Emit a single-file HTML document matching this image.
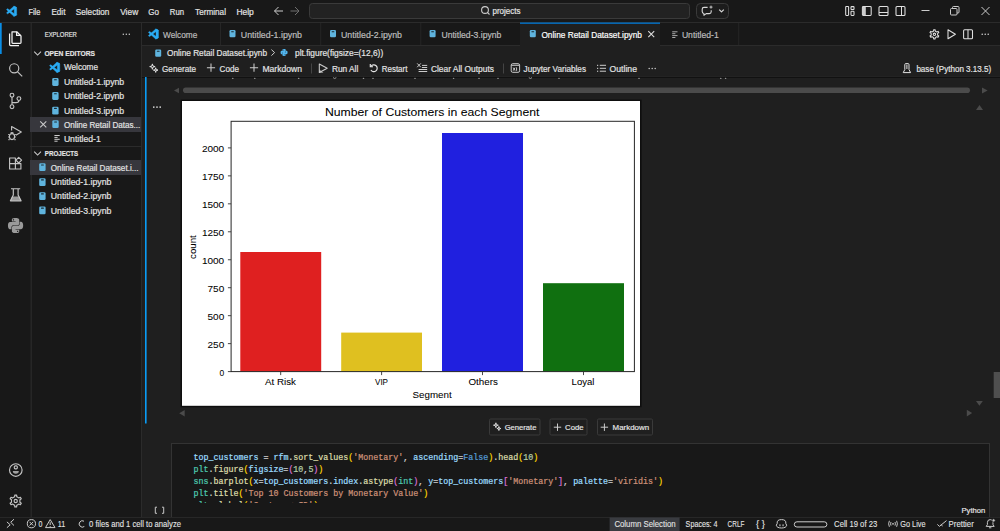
<!DOCTYPE html><html><head><meta charset="utf-8"><style>html,body{margin:0;padding:0;background:#181818;overflow:hidden;width:1000px;height:531px}svg{display:block;font-family:"Liberation Sans",sans-serif}</style></head><body>
<svg width="1000" height="531" viewBox="0 0 1000 531">
<rect x="0" y="0" width="1000" height="531" fill="#181818" />
<rect x="142" y="46" width="858" height="471" fill="#1f1f1f" />
<rect x="0" y="22" width="1000" height="1" fill="#2b2b2b" />
<rect x="30.5" y="23" width="1.5" height="494" fill="#262626" />
<rect x="141" y="23" width="1" height="494" fill="#2b2b2b" />
<rect x="142" y="45" width="858" height="1" fill="#2b2b2b" />
<rect x="0" y="517" width="1000" height="1" fill="#2b2b2b" />
<g transform="translate(6.6,6.2) scale(0.10099999999999999)" fill="#2aabf3" stroke="#2aabf3" stroke-width="3.47" stroke-linejoin="round"><path d="M96.46 10.8L75.86.87C73.48-.28 70.63.2 68.76 2.07L1.33 63.55c-1.81 1.65-1.81 4.51.01 6.16l5.51 5.01c1.49 1.350 3.72 1.45 5.32.24l81.23-61.63c2.73-2.07 6.65-.12 6.65 3.3v-.24c0-2.41-1.38-4.6-3.55-5.64z"/><path d="M96.46 89.2l-20.6 9.93c-2.38 1.15-5.23.66-7.1-1.21L1.33 36.45c-1.810-1.65-1.81-4.51.01-6.16l5.51-5.01c1.49-1.35 3.72-1.45 5.32-.24l81.23 61.63c2.73 2.07 6.65.12 6.65-3.3v.24c0 2.41-1.38 4.6-3.55 5.64z"/><path d="M75.86 99.13c-2.38 1.15-5.23.66-7.1-1.21 2.31 2.31 6.26.67 6.26-2.59V4.67c0-3.26-3.95-4.9-6.26-2.59 1.87-1.87 4.72-2.36 7.1-1.21l20.6 9.92c2.16 1.04 3.54 3.23 3.54 5.630v67.17c0 2.4-1.38 4.59-3.54 5.63z"/></g>
<text x="28.4" y="15" font-size="8.4" fill="#e4e4e4" stroke="#e4e4e4" stroke-width="0.18" textLength="12" lengthAdjust="spacingAndGlyphs" >File</text>
<text x="51.4" y="15" font-size="8.4" fill="#e4e4e4" stroke="#e4e4e4" stroke-width="0.18" textLength="14" lengthAdjust="spacingAndGlyphs" >Edit</text>
<text x="75.8" y="15" font-size="8.4" fill="#e4e4e4" stroke="#e4e4e4" stroke-width="0.18" textLength="33.6" lengthAdjust="spacingAndGlyphs" >Selection</text>
<text x="120.2" y="15" font-size="8.4" fill="#e4e4e4" stroke="#e4e4e4" stroke-width="0.18" textLength="18" lengthAdjust="spacingAndGlyphs" >View</text>
<text x="148.3" y="15" font-size="8.4" fill="#e4e4e4" stroke="#e4e4e4" stroke-width="0.18" textLength="10.7" lengthAdjust="spacingAndGlyphs" >Go</text>
<text x="169.8" y="15" font-size="8.4" fill="#e4e4e4" stroke="#e4e4e4" stroke-width="0.18" textLength="14.2" lengthAdjust="spacingAndGlyphs" >Run</text>
<text x="195.1" y="15" font-size="8.4" fill="#e4e4e4" stroke="#e4e4e4" stroke-width="0.18" textLength="30.9" lengthAdjust="spacingAndGlyphs" >Terminal</text>
<text x="236.4" y="15" font-size="8.4" fill="#e4e4e4" stroke="#e4e4e4" stroke-width="0.18" textLength="17.4" lengthAdjust="spacingAndGlyphs" >Help</text>
<g stroke="#cccccc" stroke-width="1" fill="none"><path d="M274.5 11H283M278.5 7L274.5 11L278.5 15"/></g>
<g stroke="#6e6e6e" stroke-width="1" fill="none"><path d="M290.5 11H299M295 7L299 11L295 15"/></g>
<rect x="309.5" y="3.5" width="380" height="15" rx="3" fill="#222222" stroke="#3a3a3a"/>
<g stroke="#cccccc" stroke-width="1.1" fill="none"><circle cx="485" cy="10" r="3.4"/><path d="M487.4 12.4L489.5 14.5"/></g>
<text x="492.5" y="14" font-size="8.4" fill="#e4e4e4" stroke="#e4e4e4" stroke-width="0.18" textLength="28" lengthAdjust="spacingAndGlyphs" >projects</text>
<rect x="696.5" y="3.5" width="32" height="15" rx="4" fill="#1c1c1c" stroke="#3a3a3a"/>
<g stroke="#d8d8d8" stroke-width="1.1" fill="none" stroke-linejoin="round"><path d="M707.6 7.4H704Q702.2 7.4 702.2 9.2V11.6Q702.2 13.3 703.9 13.5V15.3L706.2 13.6H709.3Q711.2 13.6 711.2 11.7V10.2"/><path d="M711 5.6V8.6M709.5 7.1H712.5" stroke-width="0.9"/><path d="M719.2 9.6L721.5 11.9L723.8 9.6" stroke-width="1.2"/></g>
<g stroke="#e0e0e0" stroke-width="1.05" fill="none"><rect x="845.7" y="6.5" width="2.9" height="8.9" rx="0.6"/><rect x="851" y="6.6" width="3" height="2.9" rx="0.6"/><rect x="851" y="11.3" width="3" height="4.1" rx="0.6"/><rect x="862.4" y="6.5" width="8.8" height="8.9" rx="0.9"/><rect x="862.6" y="6.8" width="3.2" height="8.4" fill="#cccccc" stroke="none"/><rect x="879" y="6.5" width="9" height="9" rx="1"/><path d="M879 12.5H888"/><rect x="896" y="6.5" width="9" height="9" rx="1"/><path d="M901.5 6.5V15.5"/></g>
<g stroke="#cccccc" stroke-width="1" fill="none"><path d="M921.5 10.5H929.5"/><rect x="950.5" y="8.5" width="6.5" height="6.5" rx="1"/><path d="M952.5 8.5V7.5Q952.5 6.5 953.5 6.5H958Q959 6.5 959 7.5V12Q959 13 958 13H957"/><path d="M981.5 7L989.5 15M989.5 7L981.5 15"/></g>
<rect x="0" y="23" width="1.7" height="31" fill="#0a8ee6" />
<g stroke="#f2f2f2" stroke-width="1.25" fill="none" stroke-linejoin="round"><path d="M12 31.8H16.8L21 36V42.6Q21 43.4 20.2 43.4H12.8Q12 43.4 12 42.6Z"/><path d="M16.6 31.8V35.4H21"/><path d="M9.6 33.6V44.6Q9.6 45.6 10.6 45.6H19"/></g>
<g stroke="#c4c4c4" stroke-width="1.15" fill="none"><circle cx="14.2" cy="68.3" r="4.6"/><path d="M17.6 71.8L22.2 76.4"/></g>
<g stroke="#c4c4c4" stroke-width="1.15" fill="none"><circle cx="12" cy="95.2" r="1.9"/><circle cx="12" cy="106.7" r="1.9"/><circle cx="18.9" cy="98.6" r="1.9"/><path d="M12 97.1V104.8M18.9 100.5Q18.9 102.6 16 102.6H12"/></g>
<g stroke="#c4c4c4" stroke-width="1.15" fill="none" stroke-linejoin="round"><path d="M11.6 130.6V126.5L21.3 132L15.8 135.3"/><ellipse cx="12" cy="136.6" rx="2.6" ry="3"/><path d="M8.2 134.5H9.4M8.2 137H9.4M8.4 139.6H9.6M14.6 134.5H15.8M14.6 137H15.8M14.4 139.6H15.6M10.6 133.2Q12 131.8 13.4 133.2"/></g>
<g stroke="#c4c4c4" stroke-width="1.15" fill="none" stroke-linejoin="round"><path d="M9.6 158V169H20.9V163.6H15.4V158Z"/><path d="M9.6 163.6H15.4V169"/><path d="M18.7 157.4L21.6 160.2L18.7 163L15.9 160.2Z"/></g>
<g stroke="#c4c4c4" stroke-width="1.15" fill="none" stroke-linejoin="round"><path d="M11 188.7H20.2M13.3 188.7V195L10.4 200.8H21.1L18.1 195V188.7"/></g>
<path d="M12 196.5H19.4L21 200.8H10.4Z" fill="#c4c4c4" opacity="0.75"/>
<g transform="translate(8,218) scale(0.63)" fill="#9a9a9a"><path d="M14.25.18l.9.2.73.26.59.3.45.32.34.34.25.34.16.33.1.3.04.26.02.2-.01.13V8.5l-.05.63-.13.55-.21.46-.26.38-.3.31-.33.25-.35.19-.35.14-.33.1-.3.07-.26.04-.21.02H8.77l-.69.05-.59.14-.5.22-.41.27-.33.32-.27.35-.2.36-.15.37-.1.35-.07.32-.04.27-.02.21v3.06H3.17l-.21-.03-.28-.07-.32-.12-.35-.18-.36-.26-.36-.36-.35-.46-.32-.59-.28-.73-.21-.88-.14-1.050-.05-1.23.06-1.22.16-1.04.24-.87.32-.71.36-.57.4-.44.42-.33.42-.24.4-.16.36-.1.32-.05.24-.01h.16l.06.01h8.16v-.83H6.18l-.01-2.75-.02-.37.05-.34.11-.31.17-.28.25-.26.31-.23.38-.2.44-.18.51-.15.58-.12.64-.1.71-.06.77-.04.84-.02 1.27.05zm-6.3 1.98l-.23.33-.08.41.08.41.23.34.33.22.41.09.41-.09.33-.22.23-.34.08-.41-.08-.41-.23-.33-.33-.22-.41-.09-.41.09zm13.09 3.95l.28.06.32.12.35.18.36.27.36.35.35.47.32.59.28.73.21.88.14 1.04.05 1.23-.06 1.23-.16 1.04-.24.86-.32.71-.36.57-.4.45-.42.33-.42.24-.4.16-.36.09-.32.05-.24.02-.16-.01h-8.22v.82h5.84l.01 2.76.02.36-.05.34-.11.31-.17.29-.25.25-.31.24-.38.2-.44.17-.51.15-.58.13-.64.09-.71.07-.77.04-.84.01-1.27-.04-1.07-.14-.9-.2-.73-.25-.59-.3-.45-.33-.34-.34-.25-.34-.16-.33-.1-.3-.04-.25-.02-.2.01-.13v-5.34l.05-.64.13-.54.21-.46.26-.38.3-.32.33-.24.35-.2.35-.14.33-.1.3-.06.26-.04.21-.02.13-.01h5.84l.69-.05.59-.14.5-.21.41-.28.33-.32.27-.35.2-.36.15-.36.1-.35.07-.32.04-.28.02-.21V6.07h2.09l.14.01zm-6.47 14.25l-.23.33-.08.41.08.41.23.33.33.23.41.08.41-.08.33-.23.23-.33.08-.41-.08-.41-.23-.33-.33-.23-.41-.08-.41.08z"/></g>
<g stroke="#c4c4c4" stroke-width="1.15" fill="none"><circle cx="15.8" cy="470" r="6.3"/><rect x="14.3" y="465.8" width="3" height="3" rx="1"/></g>
<path d="M12.8 471H18.8Q18.8 473.8 15.8 473.8Q12.8 473.8 12.8 471Z" fill="#c4c4c4" opacity="0.8"/>
<g stroke="#c4c4c4" stroke-width="1.15" fill="none" stroke-linejoin="round"><path d="M14.65 496.73L14.78 495.07L16.62 495.07L16.75 496.73L17.80 497.36L18.87 497.95L20.37 497.24L21.29 498.83L19.93 499.78L19.90 501.00L19.93 502.22L21.29 503.17L20.37 504.76L18.87 504.05L17.80 504.64L16.75 505.27L16.62 506.93L14.78 506.93L14.65 505.27L13.60 504.64L12.53 504.05L11.03 504.76L10.11 503.17L11.47 502.22L11.50 501.00L11.47 499.78L10.11 498.83L11.03 497.24L12.53 497.95L13.60 497.36Z"/><circle cx="15.7" cy="501" r="1.6"/></g>
<text x="44.7" y="36.9" font-size="7.4" fill="#e4e4e4" stroke="#e4e4e4" stroke-width="0.18" textLength="32.2" lengthAdjust="spacingAndGlyphs" >EXPLORER</text>
<circle cx="123.3" cy="34.2" r="0.75" fill="#cccccc"/>
<circle cx="126.3" cy="34.2" r="0.75" fill="#cccccc"/>
<circle cx="129.3" cy="34.2" r="0.75" fill="#cccccc"/>
<path d="M34.2 51.6L37.6 55.0L41.0 51.6" stroke="#cccccc" stroke-width="1.05" fill="none"/>
<text x="44.4" y="55.9" font-size="7.6" fill="#e4e4e4" stroke="#e4e4e4" stroke-width="0.18" textLength="50.6" lengthAdjust="spacingAndGlyphs" font-weight="bold" >OPEN EDITORS</text>
<g transform="translate(49.6,62.3) scale(0.102)" fill="#2aabf3" stroke="#2aabf3" stroke-width="3.43" stroke-linejoin="round"><path d="M96.46 10.8L75.86.87C73.48-.28 70.63.2 68.76 2.07L1.33 63.55c-1.81 1.65-1.81 4.51.01 6.16l5.51 5.01c1.49 1.350 3.72 1.45 5.32.24l81.23-61.63c2.73-2.07 6.65-.12 6.65 3.3v-.24c0-2.41-1.38-4.6-3.55-5.64z"/><path d="M96.46 89.2l-20.6 9.93c-2.38 1.15-5.23.66-7.1-1.21L1.33 36.45c-1.810-1.65-1.81-4.51.01-6.16l5.51-5.01c1.49-1.35 3.72-1.45 5.32-.24l81.23 61.63c2.73 2.07 6.65.12 6.65-3.3v.24c0 2.41-1.38 4.6-3.55 5.64z"/><path d="M75.86 99.13c-2.38 1.15-5.23.66-7.1-1.21 2.31 2.31 6.26.67 6.26-2.59V4.67c0-3.26-3.95-4.9-6.26-2.59 1.87-1.87 4.72-2.36 7.1-1.21l20.6 9.92c2.16 1.04 3.54 3.23 3.54 5.630v67.17c0 2.4-1.38 4.59-3.54 5.63z"/></g>
<text x="63.9" y="70.3" font-size="8.4" fill="#e4e4e4" stroke="#e4e4e4" stroke-width="0.18" textLength="34.1" lengthAdjust="spacingAndGlyphs" >Welcome</text>
<rect x="52.2" y="78.1" width="6.4" height="7.8" rx="1.3" fill="#5fb4de"/>
<rect x="54.0" y="79.19999999999999" width="2.9" height="1.1" rx="0.5" fill="#1a2a33"/>
<text x="63.9" y="85.1" font-size="8.4" fill="#e4e4e4" stroke="#e4e4e4" stroke-width="0.18" textLength="60.3" lengthAdjust="spacingAndGlyphs" >Untitled-1.ipynb</text>
<rect x="52.2" y="92.1" width="6.4" height="7.8" rx="1.3" fill="#5fb4de"/>
<rect x="54.0" y="93.19999999999999" width="2.9" height="1.1" rx="0.5" fill="#1a2a33"/>
<text x="63.9" y="99.1" font-size="8.4" fill="#e4e4e4" stroke="#e4e4e4" stroke-width="0.18" textLength="60.3" lengthAdjust="spacingAndGlyphs" >Untitled-2.ipynb</text>
<rect x="52.2" y="106.7" width="6.4" height="7.8" rx="1.3" fill="#5fb4de"/>
<rect x="54.0" y="107.8" width="2.9" height="1.1" rx="0.5" fill="#1a2a33"/>
<text x="63.9" y="113.7" font-size="8.4" fill="#e4e4e4" stroke="#e4e4e4" stroke-width="0.18" textLength="60.3" lengthAdjust="spacingAndGlyphs" >Untitled-3.ipynb</text>
<rect x="30" y="117" width="111" height="15" fill="#37373d" />
<path d="M40.2 121.3L46.3 127.4M46.3 121.3L40.2 127.4" stroke="#cccccc" stroke-width="1.05"/>
<rect x="52.3" y="120.3" width="6.4" height="7.8" rx="1.3" fill="#5fb4de"/>
<rect x="54.099999999999994" y="121.39999999999999" width="2.9" height="1.1" rx="0.5" fill="#1a2a33"/>
<text x="63.9" y="128" font-size="8.4" fill="#e4e4e4" stroke="#e4e4e4" stroke-width="0.18" textLength="76.4" lengthAdjust="spacingAndGlyphs" >Online Retail Datas...</text>
<rect x="54.4" y="135.0" width="5.3" height="1" fill="#cccccc"/>
<rect x="54.4" y="136.9" width="3.2" height="1" fill="#cccccc"/>
<rect x="54.4" y="138.8" width="5.3" height="1" fill="#cccccc"/>
<rect x="54.4" y="140.7" width="3.2" height="1" fill="#cccccc"/>
<text x="63.9" y="141.6" font-size="8.4" fill="#e4e4e4" stroke="#e4e4e4" stroke-width="0.18" textLength="36.9" lengthAdjust="spacingAndGlyphs" >Untitled-1</text>
<rect x="30" y="146" width="111" height="1" fill="#2b2b2b" />
<path d="M34.2 151.6L37.6 155.0L41.0 151.6" stroke="#cccccc" stroke-width="1.05" fill="none"/>
<text x="44.8" y="155.8" font-size="7.6" fill="#e4e4e4" stroke="#e4e4e4" stroke-width="0.18" textLength="33.4" lengthAdjust="spacingAndGlyphs" font-weight="bold" >PROJECTS</text>
<rect x="30" y="160" width="111" height="15" fill="#37373d" />
<rect x="39.2" y="163.3" width="6.4" height="7.8" rx="1.3" fill="#5fb4de"/>
<rect x="41.0" y="164.4" width="2.9" height="1.1" rx="0.5" fill="#1a2a33"/>
<text x="50.8" y="170.9" font-size="8.4" fill="#e4e4e4" stroke="#e4e4e4" stroke-width="0.18" textLength="87.7" lengthAdjust="spacingAndGlyphs" >Online Retail Dataset.i...</text>
<rect x="39.2" y="178.2" width="6.4" height="7.8" rx="1.3" fill="#5fb4de"/>
<rect x="41.0" y="179.29999999999998" width="2.9" height="1.1" rx="0.5" fill="#1a2a33"/>
<text x="50.8" y="185.2" font-size="8.4" fill="#e4e4e4" stroke="#e4e4e4" stroke-width="0.18" textLength="60.6" lengthAdjust="spacingAndGlyphs" >Untitled-1.ipynb</text>
<rect x="39.2" y="192.2" width="6.4" height="7.8" rx="1.3" fill="#5fb4de"/>
<rect x="41.0" y="193.29999999999998" width="2.9" height="1.1" rx="0.5" fill="#1a2a33"/>
<text x="50.8" y="199.2" font-size="8.4" fill="#e4e4e4" stroke="#e4e4e4" stroke-width="0.18" textLength="60.6" lengthAdjust="spacingAndGlyphs" >Untitled-2.ipynb</text>
<rect x="39.2" y="206.5" width="6.4" height="7.8" rx="1.3" fill="#5fb4de"/>
<rect x="41.0" y="207.6" width="2.9" height="1.1" rx="0.5" fill="#1a2a33"/>
<text x="50.8" y="213.5" font-size="8.4" fill="#e4e4e4" stroke="#e4e4e4" stroke-width="0.18" textLength="60.6" lengthAdjust="spacingAndGlyphs" >Untitled-3.ipynb</text>
<rect x="220" y="23" width="1" height="22" fill="#262626" />
<rect x="320.2" y="23" width="1" height="22" fill="#262626" />
<rect x="420.3" y="23" width="1" height="22" fill="#262626" />
<rect x="738.2" y="23" width="1" height="22" fill="#262626" />
<rect x="520" y="23" width="140" height="23" fill="#1f1f1f" />
<rect x="520" y="22.5" width="140" height="1.3" fill="#0078d4" />
<g transform="translate(148.5,29) scale(0.1)" fill="#2aabf3" stroke="#2aabf3" stroke-width="3.50" stroke-linejoin="round"><path d="M96.46 10.8L75.86.87C73.48-.28 70.63.2 68.76 2.07L1.33 63.55c-1.81 1.65-1.81 4.51.01 6.16l5.51 5.01c1.49 1.350 3.72 1.45 5.32.24l81.23-61.63c2.73-2.07 6.65-.12 6.65 3.3v-.24c0-2.41-1.38-4.6-3.55-5.64z"/><path d="M96.46 89.2l-20.6 9.93c-2.38 1.15-5.23.66-7.1-1.21L1.33 36.45c-1.810-1.65-1.81-4.51.01-6.16l5.51-5.01c1.49-1.35 3.72-1.45 5.32-.24l81.23 61.63c2.73 2.07 6.65.12 6.65-3.3v.24c0 2.41-1.38 4.6-3.55 5.64z"/><path d="M75.86 99.13c-2.38 1.15-5.23.66-7.1-1.21 2.31 2.31 6.26.67 6.26-2.59V4.67c0-3.26-3.95-4.9-6.26-2.59 1.87-1.87 4.72-2.36 7.1-1.21l20.6 9.92c2.16 1.04 3.54 3.23 3.54 5.630v67.17c0 2.4-1.38 4.59-3.54 5.63z"/></g>
<text x="163" y="37.5" font-size="8.4" fill="#bdbdbd" stroke="#bdbdbd" stroke-width="0.18" textLength="34.4" lengthAdjust="spacingAndGlyphs" >Welcome</text>
<rect x="229.5" y="30" width="6" height="7.2" rx="1.2" fill="#5fb4de"/>
<rect x="231.1" y="31.2" width="2.8" height="1" rx="0.5" fill="#1a2a33"/>
<text x="240.8" y="37.5" font-size="8.4" fill="#bdbdbd" stroke="#bdbdbd" stroke-width="0.18" textLength="61.2" lengthAdjust="spacingAndGlyphs" >Untitled-1.ipynb</text>
<rect x="330" y="30" width="6" height="7.2" rx="1.2" fill="#5fb4de"/>
<rect x="331.6" y="31.2" width="2.8" height="1" rx="0.5" fill="#1a2a33"/>
<text x="341" y="37.5" font-size="8.4" fill="#bdbdbd" stroke="#bdbdbd" stroke-width="0.18" textLength="61" lengthAdjust="spacingAndGlyphs" >Untitled-2.ipynb</text>
<rect x="429.6" y="30" width="6" height="7.2" rx="1.2" fill="#5fb4de"/>
<rect x="431.20000000000005" y="31.2" width="2.8" height="1" rx="0.5" fill="#1a2a33"/>
<text x="441.4" y="37.5" font-size="8.4" fill="#bdbdbd" stroke="#bdbdbd" stroke-width="0.18" textLength="60" lengthAdjust="spacingAndGlyphs" >Untitled-3.ipynb</text>
<rect x="529.8" y="30" width="6" height="7.2" rx="1.2" fill="#5fb4de"/>
<rect x="531.4" y="31.2" width="2.8" height="1" rx="0.5" fill="#1a2a33"/>
<text x="541.4" y="37.5" font-size="8.4" fill="#ffffff" stroke="#ffffff" stroke-width="0.18" textLength="100.5" lengthAdjust="spacingAndGlyphs" >Online Retail Dataset.ipynb</text>
<path d="M648.3 31.2L654.2 37.1M654.2 31.2L648.3 37.1" stroke="#dddddd" stroke-width="1.1"/>
<rect x="672.2" y="31.3" width="5.3" height="1" fill="#a8a8a8"/>
<rect x="672.2" y="33.2" width="3.2" height="1" fill="#a8a8a8"/>
<rect x="672.2" y="35.1" width="5.3" height="1" fill="#a8a8a8"/>
<rect x="672.2" y="37.0" width="3.2" height="1" fill="#a8a8a8"/>
<text x="681.9" y="37.5" font-size="8.4" fill="#bdbdbd" stroke="#bdbdbd" stroke-width="0.18" textLength="36.8" lengthAdjust="spacingAndGlyphs" >Untitled-1</text>
<g stroke="#e0e0e0" stroke-width="1.05" fill="none" stroke-linejoin="round"><path d="M933.59 31.00L933.68 29.66L935.12 29.66L935.21 31.00L936.00 31.53L936.85 31.94L938.06 31.35L938.78 32.60L937.67 33.35L937.60 34.30L937.67 35.25L938.78 36.00L938.06 37.25L936.85 36.66L936.00 37.07L935.21 37.60L935.12 38.94L933.68 38.94L933.59 37.60L932.80 37.07L931.95 36.66L930.74 37.25L930.02 36.00L931.13 35.25L931.20 34.30L931.13 33.35L930.02 32.60L930.74 31.35L931.95 31.94L932.80 31.53Z"/><circle cx="934.4" cy="34.3" r="1.2"/><path d="M948 29.8L955.4 34.3L948 38.8Z"/><rect x="963.6" y="29.8" width="8.9" height="9" rx="1"/><path d="M968 29.8V38.8"/></g>
<circle cx="982.2" cy="34.3" r="0.75" fill="#e0e0e0"/>
<circle cx="985.2" cy="34.3" r="0.75" fill="#e0e0e0"/>
<circle cx="988.2" cy="34.3" r="0.75" fill="#e0e0e0"/>
<rect x="155.2" y="49.5" width="6" height="7.2" rx="1.2" fill="#5fb4de"/>
<rect x="156.79999999999998" y="50.7" width="2.8" height="1" rx="0.5" fill="#1a2a33"/>
<text x="167" y="56.3" font-size="8.4" fill="#e4e4e4" stroke="#e4e4e4" stroke-width="0.18" textLength="100" lengthAdjust="spacingAndGlyphs" >Online Retail Dataset.ipynb</text>
<path d="M271.4 49.6L274.6 52.6L271.4 55.6" stroke="#cccccc" stroke-width="1" fill="none"/>
<g transform="translate(280.6,49) scale(0.29)" fill="#52b6ee"><path d="M14.25.18l.9.2.73.26.59.3.45.32.34.34.25.34.16.33.1.3.04.26.02.2-.01.13V8.5l-.05.63-.13.55-.21.46-.26.38-.3.31-.33.25-.35.19-.35.14-.33.1-.3.07-.26.04-.21.02H8.77l-.69.05-.59.14-.5.22-.41.27-.33.32-.27.35-.2.36-.15.37-.1.35-.07.32-.04.27-.02.21v3.06H3.17l-.21-.03-.28-.07-.32-.12-.35-.18-.36-.26-.36-.36-.35-.46-.32-.59-.28-.73-.21-.88-.14-1.050-.05-1.23.06-1.22.16-1.04.24-.87.32-.71.36-.57.4-.44.42-.33.42-.24.4-.16.36-.1.32-.05.24-.01h.16l.06.01h8.16v-.83H6.18l-.01-2.75-.02-.37.05-.34.11-.31.17-.28.25-.26.31-.23.38-.2.44-.18.51-.15.58-.12.64-.1.71-.06.77-.04.84-.02 1.27.05zm-6.3 1.98l-.23.33-.08.41.08.41.23.34.33.22.41.09.41-.09.33-.22.23-.34.08-.41-.08-.41-.23-.33-.33-.22-.41-.09-.41.09zm13.09 3.95l.28.06.32.12.35.18.36.27.36.35.35.47.32.59.28.73.21.88.14 1.04.05 1.23-.06 1.23-.16 1.04-.24.86-.32.71-.36.57-.4.45-.42.33-.42.24-.4.16-.36.09-.32.05-.24.02-.16-.01h-8.22v.82h5.84l.01 2.76.02.36-.05.34-.11.31-.17.29-.25.25-.31.24-.38.2-.44.17-.51.15-.58.13-.64.09-.71.07-.77.04-.84.01-1.27-.04-1.07-.14-.9-.2-.73-.25-.59-.3-.45-.33-.34-.34-.25-.34-.16-.33-.1-.3-.04-.25-.02-.2.01-.13v-5.34l.05-.64.13-.54.21-.46.26-.38.3-.32.33-.24.35-.2.35-.14.33-.1.3-.06.26-.04.21-.02.13-.01h5.84l.69-.05.59-.14.5-.21.41-.28.33-.32.27-.35.2-.36.15-.36.1-.35.07-.32.04-.28.02-.21V6.07h2.09l.14.01zm-6.47 14.25l-.23.33-.08.41.08.41.23.33.33.23.41.08.41-.08.33-.23.23-.33.08-.41-.08-.41-.23-.33-.33-.23-.41-.08-.41.08z"/></g>
<text x="295" y="56.3" font-size="8.4" fill="#e4e4e4" stroke="#e4e4e4" stroke-width="0.18" textLength="88.2" lengthAdjust="spacingAndGlyphs" >plt.figure(figsize=(12,6))</text>
<rect x="142" y="76" width="858" height="1" fill="#232323" />
<rect x="142" y="77" width="858" height="1" fill="#111111" />
<g stroke="#e0e0e0" stroke-width="1" fill="none" stroke-linejoin="round"><path d="M152.4 63.89999999999999L152.94 66.05999999999999L155.1 66.6L152.94 67.14L152.4 69.3L151.86 67.14L149.70000000000002 66.6L151.86 66.05999999999999Z"/><path d="M155.7 67.8L156.16 69.64L158.0 70.1L156.16 70.55999999999999L155.7 72.39999999999999L155.23999999999998 70.55999999999999L153.39999999999998 70.1L155.23999999999998 69.64Z"/></g>
<text x="162" y="72" font-size="8.4" fill="#e4e4e4" stroke="#e4e4e4" stroke-width="0.18" textLength="34" lengthAdjust="spacingAndGlyphs" >Generate</text>
<path d="M211 63.6V71.8M206.9 67.7H215.1" stroke="#cccccc" stroke-width="1.05"/>
<text x="219.6" y="72" font-size="8.4" fill="#e4e4e4" stroke="#e4e4e4" stroke-width="0.18" textLength="19.4" lengthAdjust="spacingAndGlyphs" >Code</text>
<path d="M254 63.6V71.8M249.9 67.7H258.1" stroke="#cccccc" stroke-width="1.05"/>
<text x="262.4" y="72" font-size="8.4" fill="#e4e4e4" stroke="#e4e4e4" stroke-width="0.18" textLength="39.6" lengthAdjust="spacingAndGlyphs" >Markdown</text>
<rect x="311" y="63.5" width="1" height="10" fill="#444444" />
<g stroke="#cccccc" stroke-width="1.05" fill="none" stroke-linejoin="round"><path d="M319.3 64V72.5L327.2 68.2Z"/></g>
<path d="M319.3 69.5L323.5 72.8L319.3 72.8Z" fill="#cccccc" opacity="0.8"/>
<text x="331.9" y="72" font-size="8.4" fill="#e4e4e4" stroke="#e4e4e4" stroke-width="0.18" textLength="26.4" lengthAdjust="spacingAndGlyphs" >Run All</text>
<g stroke="#e6e6e6" stroke-width="1.15" fill="none"><path d="M371 66.3A3.4 3.4 0 1 1 370.9 70"/><path d="M370.3 64.1V66.7H373"/></g>
<text x="381.8" y="72" font-size="8.4" fill="#e4e4e4" stroke="#e4e4e4" stroke-width="0.18" textLength="25.6" lengthAdjust="spacingAndGlyphs" >Restart</text>
<g stroke="#cccccc" stroke-width="1" fill="none"><path d="M417.2 63.4L420.8 67.2M420.8 63.4L417.2 67.2M422 65.4H427.2M422 67.5H427.2M418.6 69.5H427.2M418.6 71.5H427.2"/></g>
<text x="430.9" y="72" font-size="8.4" fill="#e4e4e4" stroke="#e4e4e4" stroke-width="0.18" textLength="63.1" lengthAdjust="spacingAndGlyphs" >Clear All Outputs</text>
<rect x="503" y="63.5" width="1" height="10" fill="#444444" />
<g stroke="#cccccc" stroke-width="1" fill="none"><rect x="511.2" y="63.7" width="8.4" height="8.6" rx="1.5"/><path d="M511.2 65.3H519.6"/><path d="M513.2 67.6L515 70.6M515 67.6L513.2 70.6M516.6 67.4V70.8"/></g>
<text x="523.6" y="72" font-size="8.4" fill="#e4e4e4" stroke="#e4e4e4" stroke-width="0.18" textLength="62.4" lengthAdjust="spacingAndGlyphs" >Jupyter Variables</text>
<g fill="#cccccc"><rect x="597" y="64.8" width="1.2" height="1.1"/><rect x="597" y="67.8" width="1.2" height="1.1"/><rect x="597" y="70.7" width="1.2" height="1.1"/><rect x="599.8" y="64.8" width="6.2" height="1"/><rect x="599.8" y="67.8" width="6.2" height="1"/><rect x="599.8" y="70.7" width="6.2" height="1"/></g>
<text x="609.6" y="72" font-size="8.4" fill="#e4e4e4" stroke="#e4e4e4" stroke-width="0.18" textLength="27.4" lengthAdjust="spacingAndGlyphs" >Outline</text>
<circle cx="649.2" cy="68.6" r="0.75" fill="#cccccc"/>
<circle cx="652.2" cy="68.6" r="0.75" fill="#cccccc"/>
<circle cx="655.2" cy="68.6" r="0.75" fill="#cccccc"/>
<g stroke="#e0e0e0" stroke-width="1" fill="none" stroke-linejoin="round"><path d="M904.8 69.6V64.6Q904.8 63.6 905.8 63.6H908Q909 63.6 909 64.6V69.6L910.6 72.6H903.2Z"/><path d="M906.9 64.6V69"/></g>
<text x="916.4" y="72" font-size="8.4" fill="#e4e4e4" stroke="#e4e4e4" stroke-width="0.18" textLength="74.8" lengthAdjust="spacingAndGlyphs" >base (Python 3.13.5)</text>
<rect x="180.6" y="99.6" width="461" height="307.6" fill="#0e0e0e" />
<rect x="182" y="101" width="458" height="304.8" fill="#ffffff" />
<rect x="240.3" y="252" width="80.89999999999998" height="119.60000000000002" fill="#df2020" />
<rect x="341.2" y="332.6" width="80.80000000000001" height="39.0" fill="#dfc020" />
<rect x="442" y="133" width="81" height="238.60000000000002" fill="#2020df" />
<rect x="543" y="283.2" width="81" height="88.40000000000003" fill="#107010" />
<rect x="231.1" y="121.3" width="403.3" height="250.3" fill="none" stroke="#262626" stroke-width="1"/>
<path d="M227.9 371.60H231.1" stroke="#333" stroke-width="0.9"/>
<text x="219.5" y="375.7" font-size="9.3" fill="#000000" stroke="#000000" stroke-width="0.05" textLength="4.7" lengthAdjust="spacingAndGlyphs" >0</text>
<path d="M227.9 343.64H231.1" stroke="#333" stroke-width="0.9"/>
<text x="207.5" y="347.74" font-size="9.3" fill="#000000" stroke="#000000" stroke-width="0.05" textLength="16.7" lengthAdjust="spacingAndGlyphs" >250</text>
<path d="M227.9 315.68H231.1" stroke="#333" stroke-width="0.9"/>
<text x="207.5" y="319.78" font-size="9.3" fill="#000000" stroke="#000000" stroke-width="0.05" textLength="16.7" lengthAdjust="spacingAndGlyphs" >500</text>
<path d="M227.9 287.71H231.1" stroke="#333" stroke-width="0.9"/>
<text x="207.5" y="291.81" font-size="9.3" fill="#000000" stroke="#000000" stroke-width="0.05" textLength="16.7" lengthAdjust="spacingAndGlyphs" >750</text>
<path d="M227.9 259.75H231.1" stroke="#333" stroke-width="0.9"/>
<text x="201.89999999999998" y="263.85" font-size="9.3" fill="#000000" stroke="#000000" stroke-width="0.05" textLength="22.3" lengthAdjust="spacingAndGlyphs" >1000</text>
<path d="M227.9 231.79H231.1" stroke="#333" stroke-width="0.9"/>
<text x="201.89999999999998" y="235.89" font-size="9.3" fill="#000000" stroke="#000000" stroke-width="0.05" textLength="22.3" lengthAdjust="spacingAndGlyphs" >1250</text>
<path d="M227.9 203.83H231.1" stroke="#333" stroke-width="0.9"/>
<text x="201.89999999999998" y="207.93" font-size="9.3" fill="#000000" stroke="#000000" stroke-width="0.05" textLength="22.3" lengthAdjust="spacingAndGlyphs" >1500</text>
<path d="M227.9 175.86H231.1" stroke="#333" stroke-width="0.9"/>
<text x="201.89999999999998" y="179.96" font-size="9.3" fill="#000000" stroke="#000000" stroke-width="0.05" textLength="22.3" lengthAdjust="spacingAndGlyphs" >1750</text>
<path d="M227.9 147.90H231.1" stroke="#333" stroke-width="0.9"/>
<text x="201.89999999999998" y="152.0" font-size="9.3" fill="#000000" stroke="#000000" stroke-width="0.05" textLength="22.3" lengthAdjust="spacingAndGlyphs" >2000</text>
<path d="M280.7 371.6V375.1" stroke="#333" stroke-width="0.9"/>
<text x="265" y="385.4" font-size="8.8" fill="#000000" stroke="#000000" stroke-width="0.05" textLength="31" lengthAdjust="spacingAndGlyphs" >At Risk</text>
<path d="M381.6 371.6V375.1" stroke="#333" stroke-width="0.9"/>
<text x="375" y="385.4" font-size="8.8" fill="#000000" stroke="#000000" stroke-width="0.05" textLength="13" lengthAdjust="spacingAndGlyphs" >VIP</text>
<path d="M482.5 371.6V375.1" stroke="#333" stroke-width="0.9"/>
<text x="468.4" y="385.4" font-size="8.8" fill="#000000" stroke="#000000" stroke-width="0.05" textLength="29.5" lengthAdjust="spacingAndGlyphs" >Others</text>
<path d="M583.5 371.6V375.1" stroke="#333" stroke-width="0.9"/>
<text x="571.6" y="385.4" font-size="8.8" fill="#000000" stroke="#000000" stroke-width="0.05" textLength="22.8" lengthAdjust="spacingAndGlyphs" >Loyal</text>
<text x="412.5" y="398.3" font-size="8.8" fill="#000000" stroke="#000000" stroke-width="0.05" textLength="39.1" lengthAdjust="spacingAndGlyphs" >Segment</text>
<text x="195.9" y="258.9" font-size="8.8" fill="#000000" stroke="#000000" stroke-width="0.05" textLength="23.7" lengthAdjust="spacingAndGlyphs" transform="rotate(-90 195.9 258.9)">count</text>
<text x="325" y="116.1" font-size="11.2" fill="#000000" stroke="#000000" stroke-width="0.05" textLength="214.5" lengthAdjust="spacingAndGlyphs" >Number of Customers in each Segment</text>
<rect x="145" y="77" width="1.6" height="346.5" fill="#0a9cf5" />
<circle cx="153.8" cy="107.1" r="0.85" fill="#dddddd"/>
<circle cx="157.0" cy="107.1" r="0.85" fill="#dddddd"/>
<circle cx="160.20000000000002" cy="107.1" r="0.85" fill="#dddddd"/>
<path d="M179 87.8V93.2L174 90.5Z" fill="#4b4b4b"/>
<rect x="183" y="87.5" width="787" height="5.6" rx="2.8" fill="#4b4b4b"/>
<path d="M982 87.6V93.6L987.6 90.6Z" fill="#4b4b4b"/>
<path d="M976 110L979.5 105L983 110Z" fill="#4b4b4b"/>
<rect x="993.7" y="372" width="6.3" height="26" fill="#4f4f4f" />
<path d="M976 401L979.4 405.8L982.8 401Z" fill="#4b4b4b"/>
<path d="M966.8 409.8V416.4L972.2 413.1Z" fill="#4b4b4b"/>
<path d="M184.7 410V416.6L179.2 413.3Z" fill="#4b4b4b"/>
<rect x="489.5" y="419" width="50.5" height="16" rx="1.2" fill="#1f1f1f" stroke="#3a3a3a" stroke-width="1"/>
<rect x="550" y="419" width="37" height="16" rx="1.2" fill="#1f1f1f" stroke="#3a3a3a" stroke-width="1"/>
<rect x="597.5" y="419" width="55.0" height="16" rx="1.2" fill="#1f1f1f" stroke="#3a3a3a" stroke-width="1"/>
<g stroke="#e0e0e0" stroke-width="0.95" fill="none" stroke-linejoin="round"><path d="M495.9 422.8L496.38 424.71999999999997L498.29999999999995 425.2L496.38 425.68L495.9 427.59999999999997L495.41999999999996 425.68L493.5 425.2L495.41999999999996 424.71999999999997Z"/><path d="M498.9 426.5L499.29999999999995 428.1L500.9 428.5L499.29999999999995 428.9L498.9 430.5L498.5 428.9L496.9 428.5L498.5 428.1Z"/></g>
<text x="504.7" y="430.2" font-size="7.9" fill="#e4e4e4" stroke="#e4e4e4" stroke-width="0.18" textLength="31.7" lengthAdjust="spacingAndGlyphs" >Generate</text>
<path d="M557.5 423.5V430.9M553.8 427.2H561.2" stroke="#cccccc" stroke-width="1"/>
<text x="565.1" y="430.2" font-size="7.9" fill="#e4e4e4" stroke="#e4e4e4" stroke-width="0.18" textLength="18.5" lengthAdjust="spacingAndGlyphs" >Code</text>
<path d="M604.4 423.5V430.9M600.7 427.2H608.1" stroke="#cccccc" stroke-width="1"/>
<text x="612.6" y="430.2" font-size="7.9" fill="#e4e4e4" stroke="#e4e4e4" stroke-width="0.18" textLength="36.5" lengthAdjust="spacingAndGlyphs" >Markdown</text>
<rect x="171.5" y="443.5" width="818" height="80" fill="#181818" stroke="#333333" stroke-width="1"/>
<path d="M157 507.2H155.3V513.3H157M162 507.2H163.7V513.3H162" stroke="#c8c8c8" stroke-width="1" fill="none"/>
<text x="961.5" y="513.4" font-size="7.8" fill="#e4e4e4" stroke="#e4e4e4" stroke-width="0.18" textLength="23.8" lengthAdjust="spacingAndGlyphs" >Python</text>
<defs><clipPath id="codeclip"><rect x="172" y="444" width="817" height="59"/></clipPath></defs>
<g clip-path="url(#codeclip)">
<text x="193.5" y="459.70" font-family='"Liberation Mono", monospace' font-size="8.3" textLength="344.66" lengthAdjust="spacingAndGlyphs" xml:space="preserve"><tspan fill="#9cdcfe" stroke="#9cdcfe" stroke-width="0.22">top_customers</tspan><tspan fill="#d4d4d4" stroke="#d4d4d4" stroke-width="0.22"> = </tspan><tspan fill="#9cdcfe" stroke="#9cdcfe" stroke-width="0.22">rfm</tspan><tspan fill="#d4d4d4" stroke="#d4d4d4" stroke-width="0.22">.</tspan><tspan fill="#dcdcaa" stroke="#dcdcaa" stroke-width="0.22">sort_values</tspan><tspan fill="#ffd700" stroke="#ffd700" stroke-width="0.22">(</tspan><tspan fill="#ce9178" stroke="#ce9178" stroke-width="0.22">&#x27;Monetary&#x27;</tspan><tspan fill="#d4d4d4" stroke="#d4d4d4" stroke-width="0.22">, </tspan><tspan fill="#9cdcfe" stroke="#9cdcfe" stroke-width="0.22">ascending</tspan><tspan fill="#d4d4d4" stroke="#d4d4d4" stroke-width="0.22">=</tspan><tspan fill="#569cd6" stroke="#569cd6" stroke-width="0.22">False</tspan><tspan fill="#ffd700" stroke="#ffd700" stroke-width="0.22">)</tspan><tspan fill="#d4d4d4" stroke="#d4d4d4" stroke-width="0.22">.</tspan><tspan fill="#dcdcaa" stroke="#dcdcaa" stroke-width="0.22">head</tspan><tspan fill="#ffd700" stroke="#ffd700" stroke-width="0.22">(</tspan><tspan fill="#b5cea8" stroke="#b5cea8" stroke-width="0.22">10</tspan><tspan fill="#ffd700" stroke="#ffd700" stroke-width="0.22">)</tspan></text>
<text x="193.5" y="471.80" font-family='"Liberation Mono", monospace' font-size="8.3" textLength="129.87" lengthAdjust="spacingAndGlyphs" xml:space="preserve"><tspan fill="#4ec9b0" stroke="#4ec9b0" stroke-width="0.22">plt</tspan><tspan fill="#d4d4d4" stroke="#d4d4d4" stroke-width="0.22">.</tspan><tspan fill="#dcdcaa" stroke="#dcdcaa" stroke-width="0.22">figure</tspan><tspan fill="#ffd700" stroke="#ffd700" stroke-width="0.22">(</tspan><tspan fill="#9cdcfe" stroke="#9cdcfe" stroke-width="0.22">figsize</tspan><tspan fill="#d4d4d4" stroke="#d4d4d4" stroke-width="0.22">=</tspan><tspan fill="#da70d6" stroke="#da70d6" stroke-width="0.22">(</tspan><tspan fill="#b5cea8" stroke="#b5cea8" stroke-width="0.22">10</tspan><tspan fill="#d4d4d4" stroke="#d4d4d4" stroke-width="0.22">,</tspan><tspan fill="#b5cea8" stroke="#b5cea8" stroke-width="0.22">5</tspan><tspan fill="#da70d6" stroke="#da70d6" stroke-width="0.22">)</tspan><tspan fill="#ffd700" stroke="#ffd700" stroke-width="0.22">)</tspan></text>
<text x="193.5" y="483.90" font-family='"Liberation Mono", monospace' font-size="8.3" textLength="469.53" lengthAdjust="spacingAndGlyphs" xml:space="preserve"><tspan fill="#4ec9b0" stroke="#4ec9b0" stroke-width="0.22">sns</tspan><tspan fill="#d4d4d4" stroke="#d4d4d4" stroke-width="0.22">.</tspan><tspan fill="#dcdcaa" stroke="#dcdcaa" stroke-width="0.22">barplot</tspan><tspan fill="#ffd700" stroke="#ffd700" stroke-width="0.22">(</tspan><tspan fill="#9cdcfe" stroke="#9cdcfe" stroke-width="0.22">x</tspan><tspan fill="#d4d4d4" stroke="#d4d4d4" stroke-width="0.22">=</tspan><tspan fill="#9cdcfe" stroke="#9cdcfe" stroke-width="0.22">top_customers</tspan><tspan fill="#d4d4d4" stroke="#d4d4d4" stroke-width="0.22">.</tspan><tspan fill="#9cdcfe" stroke="#9cdcfe" stroke-width="0.22">index</tspan><tspan fill="#d4d4d4" stroke="#d4d4d4" stroke-width="0.22">.</tspan><tspan fill="#dcdcaa" stroke="#dcdcaa" stroke-width="0.22">astype</tspan><tspan fill="#da70d6" stroke="#da70d6" stroke-width="0.22">(</tspan><tspan fill="#4ec9b0" stroke="#4ec9b0" stroke-width="0.22">int</tspan><tspan fill="#da70d6" stroke="#da70d6" stroke-width="0.22">)</tspan><tspan fill="#d4d4d4" stroke="#d4d4d4" stroke-width="0.22">, </tspan><tspan fill="#9cdcfe" stroke="#9cdcfe" stroke-width="0.22">y</tspan><tspan fill="#d4d4d4" stroke="#d4d4d4" stroke-width="0.22">=</tspan><tspan fill="#9cdcfe" stroke="#9cdcfe" stroke-width="0.22">top_customers</tspan><tspan fill="#da70d6" stroke="#da70d6" stroke-width="0.22">[</tspan><tspan fill="#ce9178" stroke="#ce9178" stroke-width="0.22">&#x27;Monetary&#x27;</tspan><tspan fill="#da70d6" stroke="#da70d6" stroke-width="0.22">]</tspan><tspan fill="#d4d4d4" stroke="#d4d4d4" stroke-width="0.22">, </tspan><tspan fill="#9cdcfe" stroke="#9cdcfe" stroke-width="0.22">palette</tspan><tspan fill="#d4d4d4" stroke="#d4d4d4" stroke-width="0.22">=</tspan><tspan fill="#ce9178" stroke="#ce9178" stroke-width="0.22">&#x27;viridis&#x27;</tspan><tspan fill="#ffd700" stroke="#ffd700" stroke-width="0.22">)</tspan></text>
<text x="193.5" y="496.00" font-family='"Liberation Mono", monospace' font-size="8.3" textLength="234.77" lengthAdjust="spacingAndGlyphs" xml:space="preserve"><tspan fill="#4ec9b0" stroke="#4ec9b0" stroke-width="0.22">plt</tspan><tspan fill="#d4d4d4" stroke="#d4d4d4" stroke-width="0.22">.</tspan><tspan fill="#dcdcaa" stroke="#dcdcaa" stroke-width="0.22">title</tspan><tspan fill="#ffd700" stroke="#ffd700" stroke-width="0.22">(</tspan><tspan fill="#ce9178" stroke="#ce9178" stroke-width="0.22">&#x27;Top 10 Customers by Monetary Value&#x27;</tspan><tspan fill="#ffd700" stroke="#ffd700" stroke-width="0.22">)</tspan></text>
<text x="193.5" y="508.10" font-family='"Liberation Mono", monospace' font-size="8.3" textLength="124.88" lengthAdjust="spacingAndGlyphs" xml:space="preserve"><tspan fill="#4ec9b0" stroke="#4ec9b0" stroke-width="0.22">plt</tspan><tspan fill="#d4d4d4" stroke="#d4d4d4" stroke-width="0.22">.</tspan><tspan fill="#dcdcaa" stroke="#dcdcaa" stroke-width="0.22">xlabel</tspan><tspan fill="#ffd700" stroke="#ffd700" stroke-width="0.22">(</tspan><tspan fill="#ce9178" stroke="#ce9178" stroke-width="0.22">&#x27;Customer ID&#x27;</tspan><tspan fill="#ffd700" stroke="#ffd700" stroke-width="0.22">)</tspan></text>
</g>
<ellipse cx="232.8" cy="78.3" rx="0.8" ry="0.6" fill="#a0a0a0"/>
<ellipse cx="254.8" cy="78.3" rx="0.8" ry="0.6" fill="#a0a0a0"/>
<ellipse cx="298.7" cy="78.3" rx="0.8" ry="0.6" fill="#a0a0a0"/>
<ellipse cx="363.5" cy="78.3" rx="0.8" ry="0.6" fill="#a0a0a0"/>
<ellipse cx="373" cy="78.3" rx="0.8" ry="0.6" fill="#a0a0a0"/>
<ellipse cx="415" cy="78.3" rx="0.8" ry="0.6" fill="#a0a0a0"/>
<ellipse cx="453.6" cy="78.3" rx="0.8" ry="0.6" fill="#a0a0a0"/>
<ellipse cx="479" cy="78.3" rx="0.8" ry="0.6" fill="#a0a0a0"/>
<ellipse cx="498" cy="78.3" rx="0.8" ry="0.6" fill="#a0a0a0"/>
<ellipse cx="559" cy="78.3" rx="0.8" ry="0.6" fill="#a0a0a0"/>
<ellipse cx="639" cy="78.3" rx="0.8" ry="0.6" fill="#a0a0a0"/>
<ellipse cx="720.8" cy="78.3" rx="0.8" ry="0.6" fill="#a0a0a0"/>
<ellipse cx="725.6" cy="78.3" rx="0.8" ry="0.6" fill="#a0a0a0"/>
<path d="M333.09999999999997 77.6Q334.7 79.4 336.3 77.6" stroke="#a8a8a8" stroke-width="0.9" fill="none"/>
<path d="M528.8 77.6Q530.4 79.4 532.0 77.6" stroke="#a8a8a8" stroke-width="0.9" fill="none"/>
<rect x="0" y="517.5" width="1000" height="13.5" fill="#181818" />
<rect x="0" y="517" width="1000" height="1" fill="#272727" />
<g stroke="#cccccc" stroke-width="1" fill="none"><path d="M6.9 521.9L10.2 524.8L6.9 527.7M14 519.2L10.7 522.3L14 525.5"/><circle cx="31.4" cy="523.7" r="4.1"/><path d="M29.6 521.9L33.2 525.5M33.2 521.9L29.6 525.5"/><path d="M50.2 519.6L55 527.6H45.5Z" stroke-linejoin="round"/><path d="M50.2 522.2V525M50.2 526V526.8"/><path d="M84 521.2A3.2 3.2 0 1 0 84.3 526.5"/></g>
<text x="38.6" y="526.9" font-size="8.3" fill="#e4e4e4" stroke="#e4e4e4" stroke-width="0.1" textLength="3.9" lengthAdjust="spacingAndGlyphs" >0</text>
<text x="57.8" y="526.9" font-size="8.3" fill="#e4e4e4" stroke="#e4e4e4" stroke-width="0.1" textLength="7.4" lengthAdjust="spacingAndGlyphs" >11</text>
<text x="89" y="526.9" font-size="8.3" fill="#e4e4e4" stroke="#e4e4e4" stroke-width="0.1" textLength="92" lengthAdjust="spacingAndGlyphs" >0 files and 1 cell to analyze</text>
<rect x="609.6" y="517.5" width="70" height="13.5" fill="#393b40" />
<text x="614.4" y="526.9" font-size="8.3" fill="#e4e4e4" stroke="#e4e4e4" stroke-width="0.1" textLength="61.2" lengthAdjust="spacingAndGlyphs" >Column Selection</text>
<text x="685.6" y="526.9" font-size="8.3" fill="#e4e4e4" stroke="#e4e4e4" stroke-width="0.1" textLength="32" lengthAdjust="spacingAndGlyphs" >Spaces: 4</text>
<text x="727.6" y="526.9" font-size="8.3" fill="#e4e4e4" stroke="#e4e4e4" stroke-width="0.1" textLength="16.8" lengthAdjust="spacingAndGlyphs" >CRLF</text>
<text x="756" y="526.9" font-size="8.3" fill="#e4e4e4" stroke="#e4e4e4" stroke-width="0.1" textLength="9" lengthAdjust="spacingAndGlyphs" >{ }</text>
<g stroke="#cccccc" stroke-width="1" fill="none"><path d="M777.2 523.5Q776.6 519.6 781.5 519.6Q786.4 519.6 785.8 523.5L786.7 525.2Q786.2 528 781.5 528Q776.8 528 776.3 525.2Z"/></g>
<g fill="#cccccc"><rect x="779.4" y="524.2" width="1.1" height="2" rx="0.5"/><rect x="782.5" y="524.2" width="1.1" height="2" rx="0.5"/></g>
<rect x="794.3" y="521.8" width="32.6" height="5.2" rx="2.6" fill="none" stroke="#cccccc" stroke-width="1"/>
<text x="834.1" y="526.9" font-size="8.3" fill="#e4e4e4" stroke="#e4e4e4" stroke-width="0.1" textLength="43.1" lengthAdjust="spacingAndGlyphs" >Cell 19 of 23</text>
<g stroke="#cccccc" stroke-width="0.95" fill="none"><path d="M889.4 520.8Q887.8 523.8 889.4 526.8M896.6 520.8Q898.2 523.8 896.6 526.8M891 522Q890.2 523.8 891 525.6M895 522Q895.8 523.8 895 525.6"/></g>
<circle cx="893" cy="523.8" r="0.9" fill="#cccccc"/>
<text x="900.3" y="526.9" font-size="8.3" fill="#e4e4e4" stroke="#e4e4e4" stroke-width="0.1" textLength="25.2" lengthAdjust="spacingAndGlyphs" >Go Live</text>
<g stroke="#cccccc" stroke-width="1" fill="none"><path d="M937.4 524.4L939.4 526.4L946.5 520.6M940.8 524.4L942.6 526"/></g>
<text x="948.6" y="526.9" font-size="8.3" fill="#e4e4e4" stroke="#e4e4e4" stroke-width="0.1" textLength="25.2" lengthAdjust="spacingAndGlyphs" >Prettier</text>
<g stroke="#cccccc" stroke-width="1" fill="none"><path d="M986.2 526.4H994.2L993 524.6V522.6Q993 519.6 990.2 519.6Q987.4 519.6 987.4 522.6V524.6Z"/><path d="M989 527.8H991.4"/></g>
<circle cx="993.6" cy="520.4" r="1.6" fill="#cccccc" stroke="#181818" stroke-width="0.8"/>
</svg></body></html>
